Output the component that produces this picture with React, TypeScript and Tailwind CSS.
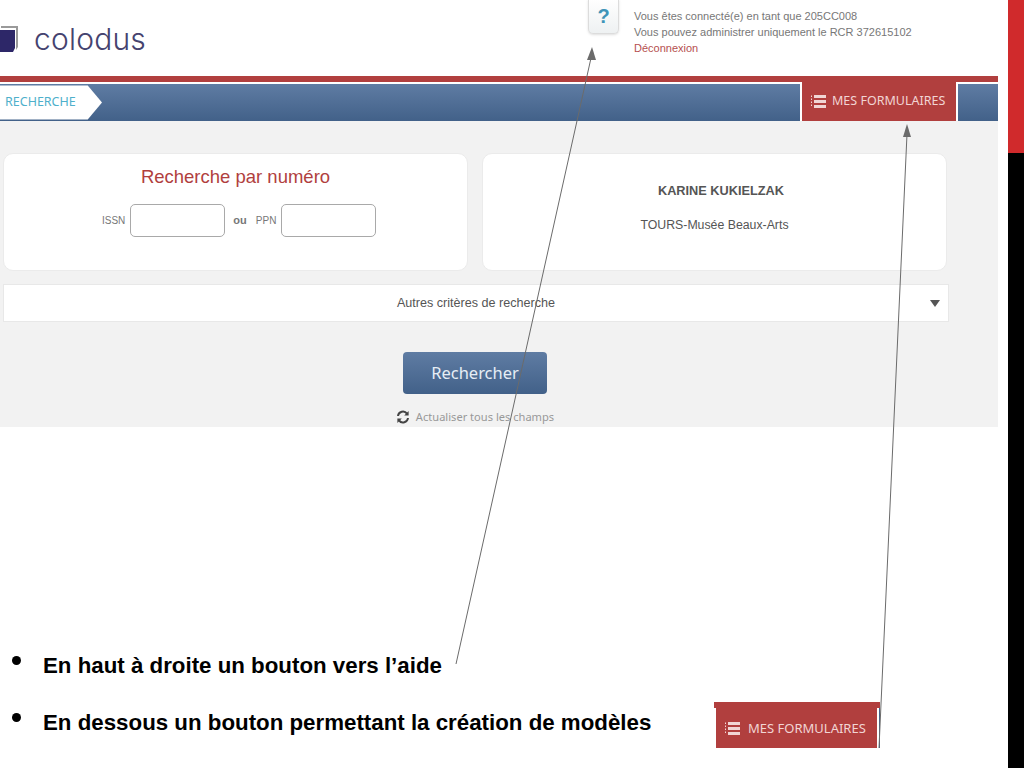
import React from "react";

function ListIcon() {
  return (
    <svg width="15" height="13" viewBox="0 0 15 13" className="shrink-0" fill="currentColor">
      <rect x="0" y="0.5" width="1" height="1.5" />
      <rect x="0" y="3.5" width="1" height="1.5" />
      <rect x="0" y="6.5" width="1" height="1.5" />
      <rect x="0" y="9.5" width="1" height="1.5" />
      <rect x="3" y="0" width="12" height="3" />
      <rect x="3" y="5" width="12" height="3" />
      <rect x="3" y="10" width="12" height="3" />
    </svg>
  );
}

function RefreshIcon() {
  return (
    <svg width="14" height="14" viewBox="0 0 14 14" fill="none" stroke="#444" strokeWidth="2">
      <path d="M2 6 A5 5 0 0 1 11 3.6" />
      <path d="M12 8 A5 5 0 0 1 3 10.4" />
      <path d="M12.6 1 V5.4 H8.2 Z" fill="#444" stroke="none" />
      <path d="M1.4 13 V8.6 H5.8 Z" fill="#444" stroke="none" />
    </svg>
  );
}

function Logo() {
  return (
    <svg width="20" height="26" viewBox="0 0 20 26" className="shrink-0">
      <path d="M3 0 H20 V21 L18 24 V2 H3 Z" fill="#9a9a9a" />
      <path d="M0 4 H17 V22 L15 26 H0 Z" fill="#2d2768" />
    </svg>
  );
}

function Arrows() {
  return (
    <svg width="1024" height="768" className="absolute top-0 left-0 pointer-events-none">
      <line x1="456" y1="664" x2="591" y2="58" stroke="#6b6b6b" strokeWidth="1" />
      <polygon points="592,47 587,60 596,60" fill="#6b6b6b" />
      <line x1="879" y1="748" x2="907" y2="134" stroke="#6b6b6b" strokeWidth="1" />
      <polygon points="907,124 903,137 911,137" fill="#6b6b6b" />
    </svg>
  );
}

export default function App() {
  return (
    <div className="relative flex w-[1024px] h-[768px] overflow-hidden bg-white font-['Liberation_Sans',sans-serif]">
      <div className="w-[1008px] shrink-0 flex flex-col">
        <div className="w-[998px]">
          {/* header */}
          <div className="h-[76px] flex">
            <div className="flex items-start pt-[26px] -ml-[2px] gap-[16px] w-[590px]">
              <Logo />
              <span className="font-['Inter',sans-serif] font-light text-[30px] leading-[26px] text-[#45436f] tracking-[0.2px]">colodus</span>
            </div>
            <div className="w-[31px] h-[35px] -mt-[1px] rounded-b-[5px] border border-t-0 border-[#dcdcdc] bg-gradient-to-b from-white to-[#eef1f2] shadow-sm flex items-center justify-center text-[#3f94b8] font-bold text-[20px]">
              ?
            </div>
            <div className="ml-[15px] pt-[8px] text-[11px] leading-[16px] text-[#777]">
              <div>Vous êtes connecté(e) en tant que 205CC008</div>
              <div>Vous pouvez administrer uniquement le RCR 372615102</div>
              <div className="text-[#b5504f]">Déconnexion</div>
            </div>
          </div>

          {/* nav */}
          <div className="h-[6px] bg-[#b13f3e]" />
          <div className="h-[2px] bg-white" />
          <div className="relative h-[37px] flex bg-gradient-to-b from-[#5f7ca3] to-[#426189]">
            <div className="flex items-center w-[102px] bg-white pl-[5px] text-[12.5px] text-[#4eb0cb] font-['Noto_Sans',sans-serif] [clip-path:polygon(0_4%,86%_4%,100%_50%,86%_96%,0_96%)]">
              RECHERCHE
            </div>
            <div className="ml-auto mr-[40px] -mt-[2px] h-[39px] w-[158px] border-x-2 border-white bg-[#b13f3e] flex items-center gap-[6px] pl-[9px] text-[#f1d5d4] font-['Noto_Sans',sans-serif] text-[12.5px]">
              <ListIcon />
              <span>MES FORMULAIRES</span>
            </div>
          </div>

          {/* search panel */}
          <div className="h-[306px] bg-[#f2f2f2] pl-[3px] pt-[32px]">
            <div className="flex gap-[14px]">
              <div className="w-[465px] h-[118px] bg-white rounded-[10px] border border-[#ebebeb] pt-[11px]">
                <h2 className="text-center text-[18.5px] leading-[24px] text-[#b13f3e]">Recherche par numéro</h2>
                <div className="flex items-center mt-[15px] ml-[98px] text-[10px] text-[#777]">
                  <span>ISSN</span>
                  <input className="w-[95px] h-[33px] ml-[5px] bg-white rounded-[5px] border border-[#a9a9a9]" />
                  <span className="ml-[8px] font-bold text-[11px]">ou</span>
                  <span className="ml-[9px]">PPN</span>
                  <input className="w-[95px] h-[33px] ml-[5px] bg-white rounded-[5px] border border-[#a9a9a9]" />
                </div>
              </div>
              <div className="w-[465px] h-[118px] bg-white rounded-[10px] border border-[#ebebeb] flex flex-col items-center pt-[29px] text-[#555]">
                <div className="ml-[13px] text-[12.75px] leading-[16px] font-bold">KARINE KUKIELZAK</div>
                <div className="text-[12.3px] leading-[16px] mt-[18px]">TOURS-Musée Beaux-Arts</div>
              </div>
            </div>

            <div className="relative mt-[13px] w-[946px] h-[38px] bg-white border border-[#e8e8e8] flex items-center justify-center text-[12.6px] text-[#555]">
              Autres critères de recherche
              <svg width="10" height="7" viewBox="0 0 10 7" className="absolute right-[8px] top-[15px]">
                <polygon points="0,0 10,0 5,7" fill="#555" />
              </svg>
            </div>

            <div className="flex flex-col items-center w-[944px] mt-[30px]">
              <button className="w-[144px] h-[42px] rounded-[4px] bg-gradient-to-b from-[#5f7ca3] to-[#426189] text-[#e6edf5] font-['Noto_Sans',sans-serif] text-[16.5px]">
                Rechercher
              </button>
              <div className="flex items-center gap-[6px] mt-[16px] text-[11.1px] leading-[14px] text-[#999] font-['Noto_Sans',sans-serif]">
                <RefreshIcon />
                <span>Actualiser tous les champs</span>
              </div>
            </div>
          </div>
        </div>

        {/* slide notes */}
        <div className="relative flex-1 pl-[43px] pt-[227px] font-bold text-[22.3px] leading-[24px] text-black">
          <div className="relative whitespace-nowrap">
            <span className="absolute -left-[31px] top-[2px] w-[9px] h-[9px] rounded-full bg-black" />
            En haut à droite un bouton vers l’aide
          </div>
          <div className="relative mt-[33px] whitespace-nowrap">
            <span className="absolute -left-[31px] top-[2px] w-[9px] h-[9px] rounded-full bg-black" />
            En dessous un bouton permettant la création de modèles
          </div>
          <div className="absolute left-[714px] top-[275px] w-[166px] h-[46px] flex flex-col font-normal">
            <div className="h-[6px] bg-[#b13f3e]" />
            <div className="flex-1 flex">
              <div className="ml-[2px] w-[161px] flex items-center gap-[8px] pl-[9px] bg-[#b13f3e] text-[#f1d5d4] font-['Noto_Sans',sans-serif] text-[13px] leading-[14px]">
                <ListIcon />
                <span>MES FORMULAIRES</span>
              </div>
              <div className="ml-[2px] w-[1px] bg-[#426189]" />
            </div>
          </div>
        </div>
      </div>

      {/* slide side strip */}
      <div className="w-[16px] flex flex-col">
        <div className="h-[153px] bg-[#d02a2c]" />
        <div className="flex-1 bg-black" />
      </div>

      <Arrows />
    </div>
  );
}
